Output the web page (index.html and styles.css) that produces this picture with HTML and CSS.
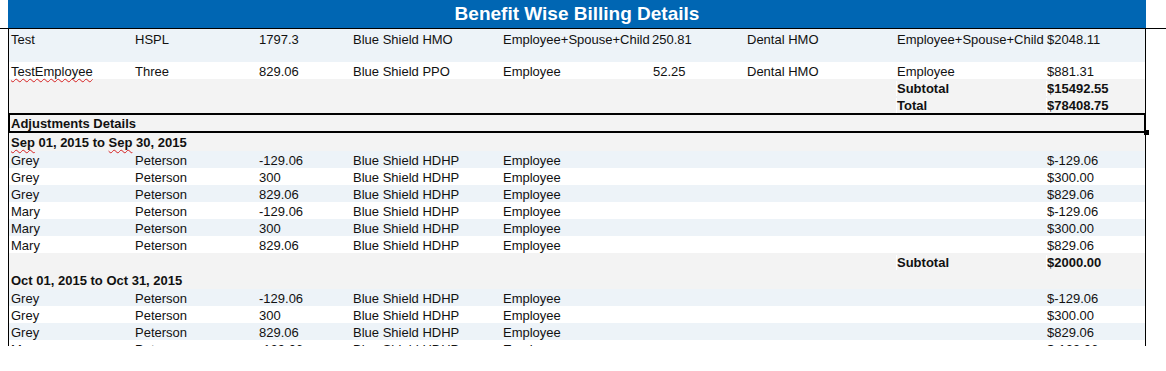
FILE: index.html
```html
<!DOCTYPE html>
<html>
<head>
<meta charset="utf-8">
<title>Benefit Wise Billing Details</title>
<link rel="stylesheet" href="styles.css">
</head>
<body>
<div class="report title">Benefit Wise Billing Details</div>
<div class="rule"></div>
<div class="report sheet">
  <div class="row blue first">
    <span>Test</span><span>HSPL</span><span>1797.3</span><span>Blue Shield HMO</span><span>Employee+Spouse+Child</span><span>250.81</span><span>Dental HMO</span><span>Employee+Spouse+Child</span><span>$2048.11</span>
  </div>
  <div class="row white">
    <span><span class="sp">TestEmployee</span></span><span>Three</span><span>829.06</span><span>Blue Shield PPO</span><span>Employee</span><span class="nudge">52.25</span><span>Dental HMO</span><span>Employee</span><span>$881.31</span>
  </div>
  <div class="row gray bold">
    <span></span><span></span><span></span><span></span><span></span><span></span><span></span><span class="cut">Subtotal</span><span class="cut">$15492.55</span>
  </div>
  <div class="row gray bold">
    <span></span><span></span><span></span><span></span><span></span><span></span><span></span><span class="cut">Total</span><span class="cut">$78408.75</span>
  </div>
  <div class="section-box">Adjustments Details<span class="handle"></span></div>
  <div class="period gray bold"><span class="sp">Sep</span> 01, 2015 to <span class="sp">Sep</span> 30, 2015</div>
  <div class="row blue"><span>Grey</span><span>Peterson</span><span>-129.06</span><span>Blue Shield HDHP</span><span>Employee</span><span></span><span></span><span></span><span>$-129.06</span></div>
  <div class="row white"><span>Grey</span><span>Peterson</span><span>300</span><span>Blue Shield HDHP</span><span>Employee</span><span></span><span></span><span></span><span>$300.00</span></div>
  <div class="row blue"><span>Grey</span><span>Peterson</span><span>829.06</span><span>Blue Shield HDHP</span><span>Employee</span><span></span><span></span><span></span><span>$829.06</span></div>
  <div class="row white"><span>Mary</span><span>Peterson</span><span>-129.06</span><span>Blue Shield HDHP</span><span>Employee</span><span></span><span></span><span></span><span>$-129.06</span></div>
  <div class="row blue"><span>Mary</span><span>Peterson</span><span>300</span><span>Blue Shield HDHP</span><span>Employee</span><span></span><span></span><span></span><span>$300.00</span></div>
  <div class="row white"><span>Mary</span><span>Peterson</span><span>829.06</span><span>Blue Shield HDHP</span><span>Employee</span><span></span><span></span><span></span><span>$829.06</span></div>
  <div class="row gray bold">
    <span></span><span></span><span></span><span></span><span></span><span></span><span></span><span class="cut">Subtotal</span><span class="cut">$2000.00</span>
  </div>
  <div class="period gray bold tallp">Oct 01, 2015 to Oct 31, 2015</div>
  <div class="row blue"><span>Grey</span><span>Peterson</span><span>-129.06</span><span>Blue Shield HDHP</span><span>Employee</span><span></span><span></span><span></span><span>$-129.06</span></div>
  <div class="row white"><span>Grey</span><span>Peterson</span><span>300</span><span>Blue Shield HDHP</span><span>Employee</span><span></span><span></span><span></span><span>$300.00</span></div>
  <div class="row blue"><span>Grey</span><span>Peterson</span><span>829.06</span><span>Blue Shield HDHP</span><span>Employee</span><span></span><span></span><span></span><span>$829.06</span></div>
  <div class="row white"><span>Mary</span><span>Peterson</span><span>-129.06</span><span>Blue Shield HDHP</span><span>Employee</span><span></span><span></span><span></span><span>$-129.06</span></div>
</div>
</body>
</html>
```
FILE: styles.css
```css
html, body {
  margin: 0;
  padding: 0;
  background: #ffffff;
}

body {
  font-family: "Liberation Sans", Arial, sans-serif;
  font-size: 13px;
  color: #111111;
}

.report {
  margin-left: 8px;
  width: 1138px;
  box-sizing: border-box;
}

.title {
  height: 28px;
  background: #0066b3;
  color: #ffffff;
  font-weight: bold;
  font-size: 19px;
  line-height: 28px;
  text-align: center;
}

.rule {
  height: 1px;
  background: #000000;
}

.sheet {
  position: relative;
  height: 317px;
  border-left: 1px solid #000000;
  border-right: 1px solid #000000;
  clip-path: inset(-10px -30px 0 -30px);
}

.row {
  display: grid;
  grid-template-columns: 124px 124px 94px 150px 149px 95px 150px 150px 1fr;
  box-sizing: border-box;
  height: 17px;
  padding-top: 2px;
  line-height: 15px;
  padding-left: 2px;
  white-space: nowrap;
}

.row.first {
  height: 33px;
  padding-top: 3px;
}

.blue { background: #edf3f8; }
.white { background: #ffffff; }
.gray { background: #f3f3f3; }
.bold { font-weight: bold; }

.cut {
  box-shadow: -1px 0 0 #ffffff;
}

.nudge {
  padding-left: 1px;
}

.sp {
  text-decoration: underline wavy #d62020;
  text-decoration-thickness: 1px;
  text-underline-offset: 2px;
  text-decoration-skip-ink: none;
}

.section-box {
  position: relative;
  margin: 0 -1px;
  height: 20px;
  box-sizing: border-box;
  border: 2px solid #000000;
  background: #f3f3f3;
  font-weight: bold;
  padding-top: 2px;
  line-height: 14px;
  padding-left: 1px;
}

.handle {
  position: absolute;
  right: -5px;
  bottom: -4px;
  width: 5px;
  height: 5px;
  background: #000000;
}

.period {
  box-sizing: border-box;
  height: 18px;
  padding-top: 2px;
  line-height: 16px;
  padding-left: 2px;
  white-space: nowrap;
}

.period.tallp {
  height: 19px;
  line-height: 17px;
}
```
